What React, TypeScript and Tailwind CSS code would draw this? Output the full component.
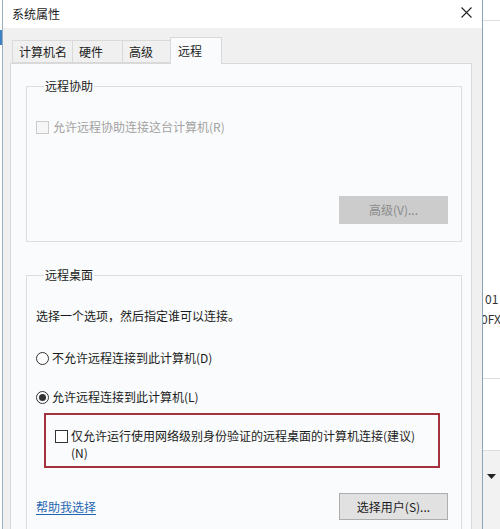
import React from "react";

const font = { fontFamily: '"Noto Sans CJK SC", "Noto Sans", sans-serif' };

function Tab({ label, active, w }: { label: string; active?: boolean; w: string }) {
  if (active) {
    return (
      <div className={`${w} h-[27px] -mb-px bg-[#fafbfc] border border-b-0 border-[#d9d9d9] flex items-center pl-[7px] relative z-10`}>
        {label}
      </div>
    );
  }
  return (
    <div className={`${w} h-[23px] bg-[#f0f0f0] border border-[#d9d9d9] border-r-0 flex items-center pl-[6px]`}>
      {label}
    </div>
  );
}

export default function App() {
  return (
    <div style={font} className="w-[500px] h-[529px] overflow-hidden bg-white flex text-[12px] text-[#1b1b1b] leading-[16px]">
      {/* window behind, left edge */}
      <div className="w-[3px] shrink-0 border-r border-[#9aaebd] flex flex-col">
        <div className="h-[30px] shrink-0" />
        <div className="h-[15px] shrink-0 bg-[#3f82c4]" />
      </div>

      {/* dialog */}
      <div className="w-[480px] shrink-0 flex flex-col border-r border-[#8ea3b4] overflow-hidden">
        <div className="h-[28px] shrink-0 bg-white flex items-center justify-between pl-[9px] pr-[10px]">
          <span>系统属性</span>
          <svg width="11" height="11" viewBox="0 0 11 11" className="-mt-[4px]">
            <path d="M0.5 0.5 L10.5 10.5 M10.5 0.5 L0.5 10.5" stroke="#222" strokeWidth="1.1" />
          </svg>
        </div>

        <div className="flex-1 min-h-0 bg-[#f0f0f0] flex flex-col pl-[7px] pr-[10px] overflow-hidden">
          <div className="h-[35px] shrink-0 flex items-end pl-[2px]">
            <Tab label="计算机名" w="w-[60px]" />
            <Tab label="硬件" w="w-[50px]" />
            <Tab label="高级" w="w-[48px]" />
            <Tab label="远程" w="w-[52px]" active />
          </div>

          <div className="flex-1 shrink-0 bg-[#fafbfc] border border-[#d9d9d9] border-b-0 pl-[15px] pr-[9px]">
            {/* 远程协助 */}
            <fieldset className="mt-[14px] border border-[#dcdcdc] pl-[9px] pr-[13px] pb-[17px]">
              <legend className="ml-[8px] px-[1px] leading-[16px]">远程协助</legend>
              <div className="mt-[25px] flex items-center gap-[4px] text-[#a2a2a2]">
                <span className="w-[13px] h-[13px] border border-[#cbcbcb] bg-[#f6f6f6]" />
                <span>允许远程协助连接这台计算机(R)</span>
              </div>
              <div className="mt-[61px] flex justify-end">
                <div className="w-[109px] h-[28px] bg-[#cccccc] flex items-center justify-center text-[#8a8a8a]">
                  高级(V)...
                </div>
              </div>
            </fieldset>

            {/* 远程桌面 */}
            <fieldset className="mt-[25px] border border-[#dcdcdc] border-b-0 pl-[9px] pr-[13px] pb-[20px]">
              <legend className="ml-[8px] px-[1px] leading-[16px]">远程桌面</legend>
              <div className="mt-[25px]">选择一个选项，然后指定谁可以连接。</div>

              <div className="mt-[26px] flex items-center gap-[3px]">
                <span className="w-[13px] h-[13px] rounded-full border border-[#333] bg-white" />
                <span>不允许远程连接到此计算机(D)</span>
              </div>

              <div className="mt-[23px] flex items-center gap-[3px]">
                <span className="w-[13px] h-[13px] rounded-full border border-[#333] bg-white flex items-center justify-center">
                  <span className="w-[7px] h-[7px] rounded-full bg-[#333]" />
                </span>
                <span>允许远程连接到此计算机(L)</span>
              </div>

              <div className="mt-[8px] ml-[8px] w-[396px] h-[55px] border-2 border-[#a3323e] flex pl-[9px] pt-[12px]">
                <span className="w-[13px] h-[13px] mt-[3px] border border-[#333] bg-white shrink-0" />
                <span className="ml-[3px] leading-[17px]">
                  仅允许运行使用网络级别身份验证的远程桌面的计算机连接(建议)
                  <br />
                  (N)
                </span>
              </div>

              <div className="mt-[25px] flex items-center justify-between">
                <span className="text-[#1f66b3] underline underline-offset-2">帮助我选择</span>
                <div className="w-[109px] h-[27px] bg-[#e1e1e1] border border-[#adadad] flex items-center justify-center">
                  选择用户(S)...
                </div>
              </div>
            </fieldset>
          </div>
        </div>
      </div>

      {/* window behind, right side */}
      <div className="flex-1 flex flex-col overflow-hidden text-[12px] text-[#333]">
        <div className="h-[21px] shrink-0 border-b border-[#dedede]" />
        <div className="h-[268px] shrink-0" />
        <div className="pl-[2px] leading-[20px] shrink-0">01</div>
        <div className="-ml-[2px] leading-[20px] shrink-0">0FX</div>
        <div className="h-[50px] shrink-0 border-b border-[#dedede]" />
        <div className="h-[72px] shrink-0 border-b border-[#dedede]" />
        <div className="flex-1 bg-[#f2f2f2] pl-[4px] pt-[23px]">
          <svg width="9" height="5" viewBox="0 0 9 5">
            <path d="M0 0 L9 0 L4.5 5 Z" fill="#222" />
          </svg>
        </div>
      </div>
    </div>
  );
}
